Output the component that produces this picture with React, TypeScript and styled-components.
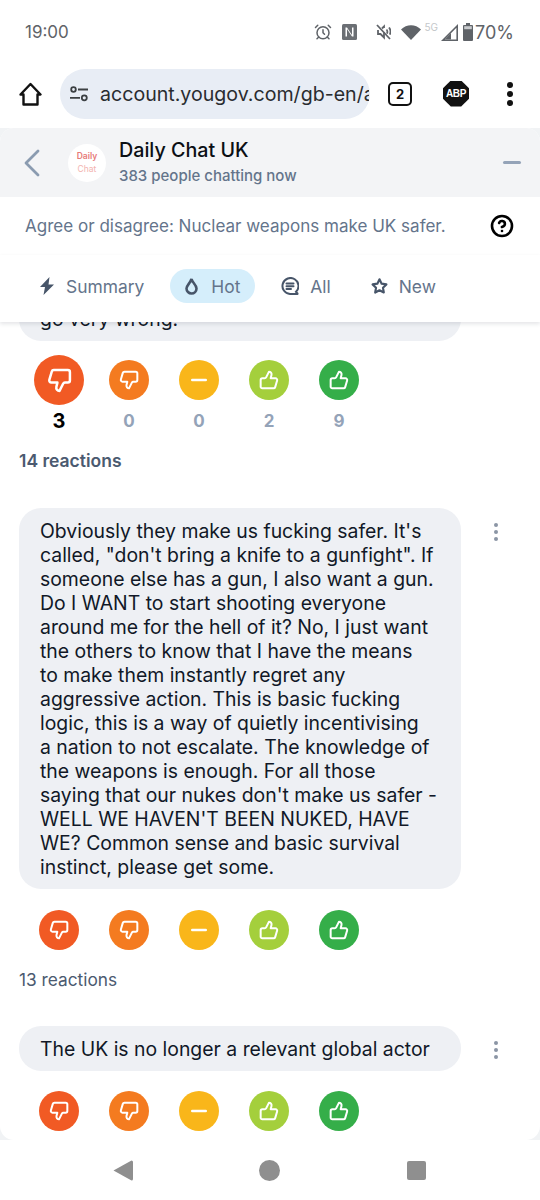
import React from 'react'
import styled, { createGlobalStyle } from 'styled-components'
import { AlarmClock, CircleHelp } from 'lucide-react'

const GlobalStyle = createGlobalStyle`
  html, body {
    margin: 0;
    padding: 0;
    background: #fff;
  }
  * {
    box-sizing: border-box;
  }
`

const Page = styled.div`
  width: 540px;
  height: 1200px;
  display: flex;
  flex-direction: column;
  overflow: hidden;
  background: #fff;
  font-family: Inter, 'Liberation Sans', sans-serif;
`

const StatusBar = styled.div`
  height: 56px;
  flex: none;
  display: flex;
  align-items: center;
  justify-content: space-between;
  padding: 8px 26px 0 25px;
  color: #5f6368;
  font-size: 17px;
`

const StatusIcons = styled.div`
  display: flex;
  align-items: center;
`

const StatusSlot = styled.span<{ $gap: number }>`
  display: flex;
  margin-left: ${(p) => p.$gap}px;
`

const FiveG = styled.span`
  margin-left: 4px;
  margin-top: -10px;
  font-size: 10px;
  color: #c4c7ca;
`

const BatteryText = styled.span`
  margin-left: 2px;
  font-size: 18px;
`

const Toolbar = styled.div`
  height: 72px;
  flex: none;
  display: flex;
  align-items: center;
  padding: 3px 0 0 19px;
`

const UrlPill = styled.div`
  width: 310px;
  height: 50px;
  margin-left: 18px;
  display: flex;
  align-items: center;
  padding: 0 0 0 10px;
  gap: 12px;
  border-radius: 25px;
  background: #e8edf5;
  overflow: hidden;
`

const UrlText = styled.span`
  width: 269px;
  flex: none;
  overflow: hidden;
  white-space: nowrap;
  font-size: 19.6px;
  color: #2a2c30;
`

const TabCount = styled.div`
  width: 24px;
  height: 24px;
  margin-left: 18px;
  border: 2.5px solid #111;
  border-radius: 5px;
  display: flex;
  align-items: center;
  justify-content: center;
  font-size: 13px;
  font-weight: 700;
  color: #111;
`

const AbpBadge = styled.div`
  width: 26px;
  height: 26px;
  margin-left: 31px;
  display: flex;
  align-items: center;
  justify-content: center;
  background: #111;
  clip-path: polygon(30% 0, 70% 0, 100% 30%, 100% 70%, 70% 100%, 30% 100%, 0 70%, 0 30%);
  font-family: 'Liberation Sans', sans-serif;
  font-size: 10px;
  letter-spacing: -0.4px;
  font-weight: 700;
  color: #fff;
`

const MenuDots = styled.div`
  margin-left: 38px;
  display: flex;
  flex-direction: column;
  gap: 3px;

  span {
    width: 6px;
    height: 6px;
    border-radius: 50%;
    background: #111;
  }
`

const PanelWrap = styled.div`
  flex: 1;
  min-height: 0;
  display: flex;
  background: #f1f3f5;
`

const Panel = styled.section`
  flex: 1;
  min-width: 0;
  display: flex;
  flex-direction: column;
  overflow: hidden;
  background: #fff;
  border-radius: 14px;
`

const ChatHeader = styled.header`
  height: 69px;
  flex: none;
  display: flex;
  align-items: center;
  padding: 0 19px 0 24px;
  background: #f3f4f6;
`

const Avatar = styled.div`
  width: 38px;
  height: 38px;
  margin-left: 28px;
  flex: none;
  display: flex;
  flex-direction: column;
  align-items: center;
  justify-content: center;
  border-radius: 50%;
  background: #fff;
  font-size: 8.5px;
  line-height: 13px;
  font-weight: 600;
  color: #e77a78;

  span + span {
    font-weight: 400;
    color: #f3b3b0;
  }
`

const HeaderText = styled.div`
  flex: 1;
  margin-left: 13px;
  margin-top: 1px;
`

const ChatTitle = styled.h1`
  margin: 0;
  font-size: 19.7px;
  line-height: 26px;
  font-weight: 500;
  color: #0b0f14;
`

const ChatSubtitle = styled.div`
  font-size: 15px;
  line-height: 26px;
  font-weight: 500;
  color: #64748b;
`

const Minimise = styled.div`
  width: 18px;
  height: 2.5px;
  background: #94a3b8;
  border-radius: 2px;
`

const Question = styled.div`
  flex: none;
  height: 58px;
  display: flex;
  align-items: center;
  justify-content: space-between;
  padding: 0 26px 0 25px;
  font-size: 17.05px;
  color: #64748b;

  span {
    margin-top: -2px;
  }
`

const Tabs = styled.nav`
  position: relative;
  z-index: 2;
  flex: none;
  height: 67px;
  display: flex;
  align-items: flex-start;
  gap: 12px;
  padding: 14px 0 0 25px;
  background: #fff;
  box-shadow: 0 2px 4px rgba(30, 41, 59, 0.12);
`

const Tab = styled.div<{ $active?: boolean }>`
  height: 34px;
  display: flex;
  align-items: center;
  gap: 11px;
  padding: 0 ${(p) => (p.$active ? 15 : 14)}px;
  border-radius: 17px;
  background: ${(p) => (p.$active ? '#d5eefb' : 'transparent')};
  font-size: 17.4px;
  color: #64748b;
`

const Messages = styled.div`
  flex: 1;
  min-height: 0;
  overflow: hidden;
  padding: 0 19px;
`

const MessageRow = styled.div<{ $top: number }>`
  display: flex;
  align-items: flex-start;
  margin-top: ${(p) => p.$top}px;
`

const Bubble = styled.div`
  width: 442px;
  flex: none;
  padding: 10.5px 0 10.5px 21px;
  border-radius: 22px;
  background: #eef0f4;
  font-size: 19.4px;
  line-height: 24px;
  color: #111827;
`

const Kebab = styled.div`
  margin: 15px 0 0 33px;
  display: flex;
  flex-direction: column;
  gap: 3px;

  span {
    width: 4px;
    height: 4px;
    border-radius: 50%;
    background: #8b95a5;
  }
`

const Reactions = styled.div<{ $top: number }>`
  display: flex;
  margin: ${(p) => p.$top}px 0 0 5px;
`

const ReactionColumn = styled.div`
  width: 70px;
  display: flex;
  flex-direction: column;
  align-items: center;
`

const CircleSlot = styled.div<{ $tall?: boolean }>`
  height: ${(p) => (p.$tall ? 50 : 40)}px;
  display: flex;
  align-items: center;
`

const Circle = styled.div<{ $colour: string; $size: number }>`
  width: ${(p) => p.$size}px;
  height: ${(p) => p.$size}px;
  display: flex;
  align-items: center;
  justify-content: center;
  border-radius: 50%;
  background: ${(p) => p.$colour};
`

const Count = styled.div<{ $picked?: boolean }>`
  margin-top: 6px;
  line-height: 20px;
  font-weight: 700;
  color: ${(p) => (p.$picked ? '#000' : '#94a3b8')};
  font-size: ${(p) => (p.$picked ? 20 : 17)}px;
`

const ReactionTotal = styled.div<{ $bold?: boolean }>`
  margin-top: 20px;
  font-size: ${(p) => (p.$bold ? 17.5 : 17.3)}px;
  line-height: 20px;
  font-weight: ${(p) => (p.$bold ? 600 : 400)};
  color: #4b5a70;
`

const NavBar = styled.div`
  height: 60px;
  flex: none;
  display: flex;
  align-items: center;
  padding-left: 113px;
  background: #fff;
`

const NavCircle = styled.div`
  width: 21px;
  height: 21px;
  margin-left: 126px;
  border-radius: 50%;
  background: #8f8f8f;
`

const NavSquare = styled.div`
  width: 19px;
  height: 19px;
  margin-left: 127px;
  border-radius: 2px;
  background: #8f8f8f;
`

const COLOURS = ['#f15a24', '#f47b20', '#f9b61a', '#a4cf3c', '#35ae49']

function ThumbDown({ size }: { size: number }) {
  return (
    <svg width={size} height={size} viewBox="0 0 24 24" fill="none" stroke="#fff" strokeWidth="2.4" strokeLinejoin="round">
      <path d="M9 18.12 10 14H4.17a2 2 0 0 1-1.92-2.56l2.33-8A2 2 0 0 1 6.5 2H20a2 2 0 0 1 2 2v8a2 2 0 0 1-2 2h-2.76a2 2 0 0 0-1.79 1.11L12 22a3.13 3.13 0 0 1-3-3.88Z" />
    </svg>
  )
}

function ThumbUp({ size }: { size: number }) {
  return (
    <svg width={size} height={size} viewBox="0 0 24 24" fill="none" stroke="#fff" strokeWidth="2.4" strokeLinejoin="round">
      <path d="M15 5.88 14 10h5.83a2 2 0 0 1 1.92 2.56l-2.33 8A2 2 0 0 1 17.5 22H4a2 2 0 0 1-2-2v-8a2 2 0 0 1 2-2h2.76a2 2 0 0 0 1.79-1.11L12 2a3.13 3.13 0 0 1 3 3.88Z" />
    </svg>
  )
}

function Neutral() {
  return (
    <svg width="16" height="4" viewBox="0 0 16 4">
      <rect width="16" height="2.6" y="0.7" rx="1.3" fill="#fff" />
    </svg>
  )
}

function ReactionIcon({ index, size }: { index: number; size: number }) {
  if (index < 2) return <ThumbDown size={size} />
  if (index === 2) return <Neutral />
  return <ThumbUp size={size} />
}

function ReactionBar({ top, counts, picked }: { top: number; counts?: number[]; picked?: number }) {
  return (
    <Reactions $top={top}>
      {COLOURS.map((colour, i) => (
        <ReactionColumn key={colour}>
          <CircleSlot $tall={picked !== undefined}>
            <Circle $colour={colour} $size={picked === i ? 50 : 40}>
              <ReactionIcon index={i} size={picked === i ? 25 : 20} />
            </Circle>
          </CircleSlot>
          {counts && <Count $picked={picked === i}>{counts[i]}</Count>}
        </ReactionColumn>
      ))}
    </Reactions>
  )
}

function Message({ top, menu = true, children }: { top: number; menu?: boolean; children: React.ReactNode }) {
  return (
    <MessageRow $top={top}>
      <Bubble>{children}</Bubble>
      {menu && (
        <Kebab>
          <span />
          <span />
          <span />
        </Kebab>
      )}
    </MessageRow>
  )
}

export default function App() {
  return (
    <Page>
      <GlobalStyle />
      <StatusBar>
        <span>19:00</span>
        <StatusIcons>
          <AlarmClock size={18} color="#5f6368" strokeWidth={2} />
          <StatusSlot $gap={10}>
            <svg width="15" height="16" viewBox="0 0 15 16">
              <rect width="15" height="16" rx="1.5" fill="#6b6f74" />
              <path d="M3.5 12.5V3.5h1.5L10 11V3.5h1.5v9H10L5 5v7.5Z" fill="#fff" />
            </svg>
          </StatusSlot>
          <StatusSlot $gap={19}>
            <svg width="15" height="16" viewBox="0 0 15 16" fill="none" stroke="#5f6368" strokeWidth="1.8">
              <path d="M1 1l13 14" />
              <path d="M2 6v4h2.5l3.5 3.5V8M8 4V2.5L6 4.5M10.5 5.5c1 1.2 1 3 .4 4.2M13 3.5c1.6 2 1.8 5 .8 7.2" />
            </svg>
          </StatusSlot>
          <StatusSlot $gap={10}>
            <svg width="20" height="15" viewBox="0 0 20 15">
              <path d="M0 4.5C5.5-1.2 14.5-1.2 20 4.5L10 15Z" fill="#5f6368" />
            </svg>
          </StatusSlot>
          <FiveG>5G</FiveG>
          <StatusSlot $gap={3}>
            <svg width="17" height="17" viewBox="0 0 17 17">
              <path d="M17 0v17H0ZM15.4 3.8 3.8 15.4h11.6Z" fill="#5f6368" />
              <path d="M10 9v6.4H3.8Z" fill="#5f6368" />
            </svg>
          </StatusSlot>
          <StatusSlot $gap={5}>
            <svg width="10" height="18" viewBox="0 0 10 18">
              <path d="M3 0h4v2h2a1 1 0 0 1 1 1v14a1 1 0 0 1-1 1H1a1 1 0 0 1-1-1V3a1 1 0 0 1 1-1h2Z" fill="#5f6368" />
              <rect x="1.2" y="3.2" width="7.6" height="3" fill="#c9cbce" />
            </svg>
          </StatusSlot>
          <BatteryText>70%</BatteryText>
        </StatusIcons>
      </StatusBar>

      <Toolbar>
        <svg width="23" height="24" viewBox="0 0 23 24" fill="none" stroke="#111" strokeWidth="2.4" strokeLinejoin="round">
          <path d="M1.5 12.5 11.5 2l10 10.5H18.500V22.500H4.500V12.500Z" />
        </svg>
        <UrlPill>
          <svg width="18" height="16" viewBox="0 0 18 16" fill="none" stroke="#3c4043" strokeWidth="1.8" style={{ flex: 'none' }}>
            <circle cx="3.500" cy="3.500" r="2.300" />
            <path d="M8 3.500h10M0 11.800h10" />
            <circle cx="14.300" cy="11.800" r="2.500" />
          </svg>
          <UrlText>account.yougov.com/gb-en/a</UrlText>
        </UrlPill>
        <TabCount>2</TabCount>
        <AbpBadge>ABP</AbpBadge>
        <MenuDots>
          <span />
          <span />
          <span />
        </MenuDots>
      </Toolbar>

      <PanelWrap>
        <Panel>
          <ChatHeader>
            <svg width="16" height="28" viewBox="0 0 16 28" fill="none" stroke="#8a9bb0" strokeWidth="2.8" strokeLinecap="round" strokeLinejoin="round">
              <path d="M14 2 2 14l12 12" />
            </svg>
            <Avatar>
              <span>Daily</span>
              <span>Chat</span>
            </Avatar>
            <HeaderText>
              <ChatTitle>Daily Chat UK</ChatTitle>
              <ChatSubtitle>383 people chatting now</ChatSubtitle>
            </HeaderText>
            <Minimise />
          </ChatHeader>

          <Question>
            <span>Agree or disagree: Nuclear weapons make UK safer.</span>
            <CircleHelp size={24} color="#000" strokeWidth={2.6} />
          </Question>

          <Tabs>
            <Tab>
              <svg width="16" height="18" viewBox="0 0 16 18" fill="#475569">
                <path d="M10.500 0 1 10h5l-1.500 8L15 7.500H9.500Z" />
              </svg>
              Summary
            </Tab>
            <Tab $active>
              <svg width="15" height="18" viewBox="0 0 15 18" fill="none" stroke="#475569" strokeWidth="2.600">
                <path d="M6.500 2C7 5.500 11.500 7.500 11.500 11.500a5 5 0 0 1-10 0C1.500 8.500 5 6.500 6.500 2Z" />
              </svg>
              Hot
            </Tab>
            <Tab>
              <svg width="18" height="18" viewBox="0 0 18 18" fill="none" stroke="#475569" strokeWidth="2" strokeLinecap="round">
                <path d="M16.500 16.500 15 14.800A8 8 0 1 0 9 17h7.500" />
                <path d="M5.500 6.500h7M5.500 9.200h7M5.500 12h4.500" />
              </svg>
              All
            </Tab>
            <Tab>
              <svg width="17" height="18" viewBox="0 0 24 24" fill="none" stroke="#475569" strokeWidth="3" strokeLinejoin="round">
                <path d="m12 2.500 3 6.200 6.800 1-4.900 4.700 1.200 6.800-6.100-3.200-6.100 3.200 1.200-6.800L2.200 9.700l6.800-1Z" />
              </svg>
              New
            </Tab>
          </Tabs>

          <Messages>
            <Message top={-26} menu={false}>
              go very wrong.
            </Message>
            <ReactionBar top={14} counts={[3, 0, 0, 2, 9]} picked={0} />
            <ReactionTotal $bold>14 reactions</ReactionTotal>

            <Message top={37}>
              Obviously they make us fucking safer. It's
              <br />
              called, "don't bring a knife to a gunfight". If
              <br />
              someone else has a gun, I also want a gun.
              <br />
              Do I WANT to start shooting everyone
              <br />
              around me for the hell of it? No, I just want
              <br />
              the others to know that I have the means
              <br />
              to make them instantly regret any
              <br />
              aggressive action. This is basic fucking
              <br />
              logic, this is a way of quietly incentivising
              <br />
              a nation to not escalate. The knowledge of
              <br />
              the weapons is enough. For all those
              <br />
              saying that our nukes don't make us safer -
              <br />
              WELL WE HAVEN'T BEEN NUKED, HAVE
              <br />
              WE? Common sense and basic survival
              <br />
              instinct, please get some.
            </Message>
            <ReactionBar top={21} />
            <ReactionTotal>13 reactions</ReactionTotal>

            <Message top={36}>The UK is no longer a relevant global actor</Message>
            <ReactionBar top={20} />
          </Messages>
        </Panel>
      </PanelWrap>

      <NavBar>
        <svg width="20" height="21" viewBox="0 0 20 21">
          <path d="M18.500 0.500a1.500 1.500 0 0 1 1.500 1.500v17a1.500 1.500 0 0 1-1.500 1.500L0.500 10.500Z" fill="#8f8f8f" />
        </svg>
        <NavCircle />
        <NavSquare />
      </NavBar>
    </Page>
  )
}
